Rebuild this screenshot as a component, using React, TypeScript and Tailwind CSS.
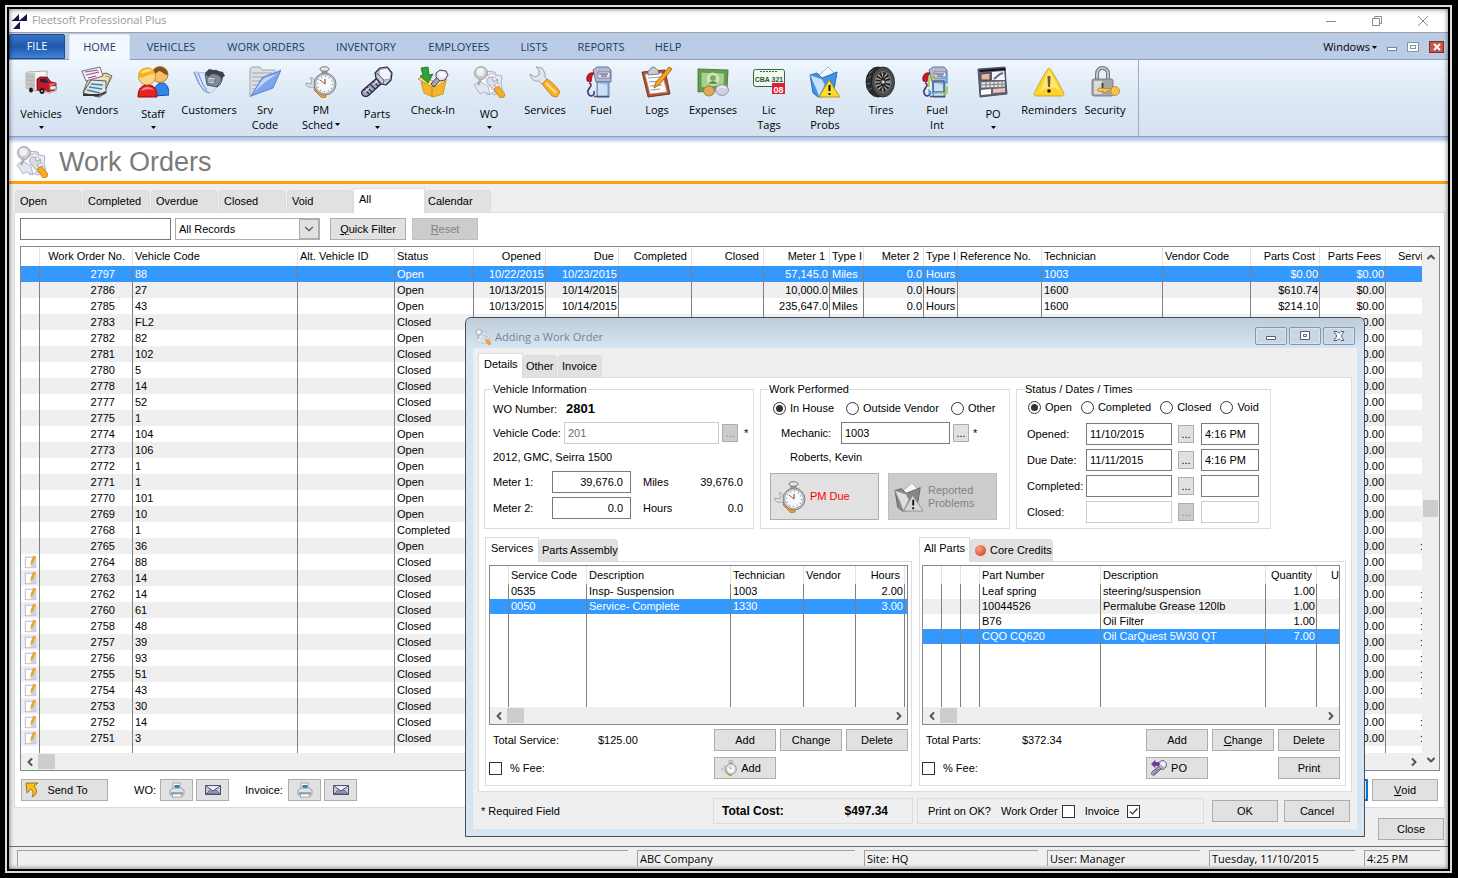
import type { ReactNode } from 'react';
import clsx from 'clsx';
import { ChevronDown, ChevronLeft, ChevronRight, ChevronUp } from 'lucide-react';

/* ---------- icons ---------- */

type IconProps = { className?: string };

function Svg({ className = 'size-8', children }: { className?: string; children: ReactNode }) {
    return (
        <svg viewBox="0 0 32 32" className={clsx('shrink-0', className)} fill="none" strokeLinejoin="round" aria-hidden="true">
            {children}
        </svg>
    );
}

function LogoIcon() {
    return (
        <svg viewBox="0 0 16 16" className="size-4" fill="#21124a" aria-hidden="true">
            <path d="M0 8 7 1v7zM8 7l7-6v6zM0 7h15v1H0zM8 8.500V16H1z" />
        </svg>
    );
}

function TruckIcon() {
    return (
        <Svg>
            <path d="m1 7 2-1 19-1v16l-12 4-9-3z" fill="#f4f4f4" stroke="#9a9a9a" strokeWidth="0.8" />
            <path d="M1 7h9v18l-9-3z" fill="#c4c4c4" />
            <path d="m2 10 7 1m-7 3 7 1m-7 3 7 1" stroke="#aaa" strokeWidth="0.800" />
            <path d="M12 13l3-2h7l4 5 5 1v7l-6 3-13-3z" fill="#c9182b" stroke="#5d0b14" strokeWidth="0.8" />
            <path d="M15 13h6l3 4-9-1z" fill="#1d2a36" />
            <path d="m24 18 6-1 1 1-6 2z" fill="#f0707a" />
            <path d="M25 20h6v3l-6 1z" fill="#f0f0f0" stroke="#777" strokeWidth="0.6" />
            <path d="m17 24 6 3 8-2v-2" stroke="#c9c9c9" strokeWidth="1.500" />
            <ellipse cx="17" cy="25" rx="2.500" ry="3" fill="#1a1a1a" />
            <circle cx="17" cy="25" r="1" fill="#bbb" />
            <ellipse cx="6" cy="24" rx="2" ry="2.500" fill="#1a1a1a" />
        </Svg>
    );
}

function VendorsIcon() {
    return (
        <Svg>
            <path d="M7 13 25 7l6 3-8 17-5 4L2 27z" fill="#e9dfbd" stroke="#3d362b" strokeWidth="0.800" />
            <path d="M2 27 10 14l15 1 0 12-7 4z" fill="#dce8f1" stroke="#3d362b" strokeWidth="0.800" />
            <path d="m10 18 12 1M8 21l13 2M6 24l13 3" stroke="#4c7f9c" strokeWidth="1.400" />
            <path d="M2 29h16l7-3" stroke="#39342c" strokeWidth="1.800" />
            <path d="M1 5 19 1l3 9-17 5z" fill="#f8eef6" stroke="#5c4a5a" strokeWidth="0.800" />
            <path d="m4 6 13-2M5 9l13-3M7 12l8-2" stroke="#8d4f8a" strokeWidth="1.100" />
            <path d="m24 10 5 1-3 9" stroke="#a7935b" />
        </Svg>
    );
}

function StaffIcon() {
    return (
        <Svg>
            <path d="M17 30c0-9 3-13 8-13s7 5 7 12z" fill="#2f86e8" stroke="#1450a0" />
            <circle cx="23" cy="8.500" r="8" fill="#f6c069" stroke="#a2631a" strokeWidth="0.800" />
            <path d="M15 8C16-2 31-1 31 9c-4 0-6-4-9-4-2 2-4 3-7 3z" fill="#80521f" />
            <path d="M1 31c0-8 3-12 10-12s9 5 9 12z" fill="#e32224" stroke="#960d11" />
            <path d="M4 25c2-5 10-5 13-1-4-1-9-1-13 1z" fill="#ff8d86" />
            <circle cx="10" cy="10.500" r="8.500" fill="#fbd58a" stroke="#c27a10" strokeWidth="0.800" />
            <path d="M1 11C1-1 17-1 18 8c-7-1-10 5-17 3z" fill="#f9b020" />
            <path d="M4 7c3-5 9-5 11-2-4 0-7 3-11 2z" fill="#ffe08c" />
        </Svg>
    );
}

function CustomersIcon() {
    return (
        <Svg>
            <path d="M1 6c4 3 4 12 10 19l6 2c7-4 9-9 10-14L14 7z" fill="#d7e6fb" stroke="#9db6df" strokeWidth="0.800" />
            <path d="M1 6c3 8 6 17 15 21M5 7c3 6 4 12 9 17" stroke="#5d84c4" />
            <path d="m12 8 11-4 8 5-7 12-10-2z" fill="#828c98" stroke="#40474f" strokeWidth="0.800" />
            <path d="m12 7 4-4 14 3 2 4-4 2-3-3-6-1-4 3z" fill="#3d444c" />
            <path d="m15 11 8 1-2 6-6-1z" fill="#d5dae0" stroke="#59626d" strokeWidth="0.700" />
            <path d="M17 13v3m2-3v3m2-3v3" stroke="#59626d" strokeWidth="0.900" />
            <path d="M29 12c0 3-1 6-5 9" stroke="#22262b" />
        </Svg>
    );
}

function FolderIcon() {
    return (
        <Svg>
            <path d="M1 31V3l2-2h8l2 3h13v4z" fill="#dcdfe4" stroke="#8f959e" strokeWidth="0.800" />
            <path d="M3 7h20M3 11h16M3 15h12M3 19h10M3 23h6" stroke="#b3b8c0" strokeWidth="1.500" />
            <path d="M2 30 13 12c6-4 12-4 19-8l-8 18z" fill="#7ea6ec" stroke="#4d73bd" strokeWidth="0.800" />
            <path d="m5 26 9-13c5-3 10-3 15-6l-14 10z" fill="#c3d8fb" />
        </Svg>
    );
}

function StopwatchIcon({ className }: IconProps) {
    return (
        <Svg className={className}>
            <path d="m1 17 5 1 1-3-2-3c3-1 5 2 5 5l8 9-3 3-7-8c-4 1-8-1-7-4z" fill="#dde3ea" stroke="#8c949e" strokeWidth="0.800" />
            <path d="m9 24 8 8 4-1v-3l-9-8z" fill="#f2a128" stroke="#b76f10" strokeWidth="0.800" />
            <path d="M17 4h5v3h-5z" fill="#b4b7ba" stroke="#777" strokeWidth="0.700" />
            <path d="M15 3c0-3 9-3 9 0s-9 3-9 0z" fill="#e6e8ea" stroke="#666" strokeWidth="0.900" />
            <circle cx="20" cy="18" r="11" fill="#b9bec3" stroke="#6c7278" strokeWidth="0.800" />
            <circle cx="20" cy="18" r="9.300" fill="#f7f8f9" stroke="#979da3" strokeWidth="0.700" />
            <circle cx="20" cy="18" r="7.500" stroke="#777" strokeWidth="1.200" strokeDasharray="0.900 3.027" />
            <path d="m20 18-5-4" stroke="#d02b22" strokeWidth="0.900" />
            <path d="M20 18v-5" stroke="#333" strokeWidth="0.900" />
        </Svg>
    );
}

function BoltIcon({ className, arrow }: IconProps & { arrow?: boolean }) {
    return (
        <Svg className={className}>
            <path d="m16 12 5 5L8 29c-2 2-6 2-7-1-1-2 0-3 1-4z" fill="#a9a6c2" stroke="#24213a" strokeWidth="1.200" />
            <path d="m12 15 5 5M9 18l5 5M6 21l5 5M3 23l5 5" stroke="#35324e" strokeWidth="1.400" />
            <path d="m17 14-4 4M8 22l-4 4" stroke="#efeef8" strokeWidth="1.200" />
            <path d="m14 7 5-5 7-1 5 6-1 7-5 5-5-1-5-6z" fill="#c6c4da" stroke="#24213a" strokeWidth="1.200" />
            <path d="m18 4 8-2 4 5-1 6-6 1-5-5z" fill="#f2f2fa" stroke="#8582a0" strokeWidth="0.700" />
            <path d="m14 7 4 2 5 5-1 4" stroke="#514e6c" strokeWidth="0.800" />
            {arrow && <path d="m1 8 7-7v4h8v6H8v4z" fill="#7d2fa3" stroke="#491663" />}
        </Svg>
    );
}

function CheckInIcon() {
    return (
        <Svg>
            <path d="m4 16 12 4 13-5-3 13-10 3-9-4z" fill="#f5b62d" stroke="#c98b16" strokeWidth="0.800" />
            <path d="m1 13 5-3 10 5-1 6zM30 14l-6-3-8 5 3 5z" fill="#fddd7d" stroke="#c78a17" strokeWidth="0.800" />
            <path d="M15 21v10" stroke="#c78a17" />
            <path d="m4 2 7-1 1 8 4-1-5 9-8-7 3-1z" fill="#2ea336" stroke="#146b1b" strokeWidth="0.800" />
            <path d="m21 10 3 3-7 8-3-3z" fill="#a6a5bf" stroke="#34324a" strokeWidth="0.900" />
            <path d="m19 7 4-3 6 1 2 4-3 5-5 1-4-4z" fill="#e4e3ef" stroke="#34324a" strokeWidth="0.900" />
            <path d="m22 6 5 0 2 4-4 2-3-3z" fill="#fafaff" />
        </Svg>
    );
}

function WorkOrderIcon({ className }: IconProps) {
    return (
        <Svg className={className}>
            <path d="m11 5 11 1 1 3 6 1-1 7 2 9-9 3-12-9z" fill="#e9ecf3" stroke="#9aa0b4" strokeWidth="0.800" />
            <path d="m6 13 14-6 8 16-14 6z" fill="#fbfbfe" stroke="#a9aec0" strokeWidth="0.800" />
            <path d="m1 19 5-4 9 5 2 9-6-3-4 2z" fill="#e3e6ee" stroke="#a5aaba" strokeWidth="0.800" />
            <circle cx="8" cy="7" r="6.500" fill="#c7c9cc" stroke="#909397" strokeWidth="0.800" />
            <circle cx="7.500" cy="6" r="4" fill="#f0f1f2" />
            <path d="m8 13-3 6" stroke="#aaacaf" strokeWidth="2.500" />
            <path d="m16 11 4 0 0 4 3 0 1-2c2 4-1 6-3 6l5 5-3 3-8-9c-2-2-2-5 1-7z" fill="#d9dde5" stroke="#8d95a3" strokeWidth="0.800" />
            <path d="m21 23 4-3 7 8-1 3-4 1z" fill="#f8ab25" stroke="#c77d0d" strokeWidth="0.800" />
        </Svg>
    );
}

function WrenchIcon() {
    return (
        <Svg>
            <path d="m7 1 6 1 3 5v4l4 4-5 5-5-5c-5 1-8-2-9-7l5 3 4-2 0-5z" fill="#e2e5ea" stroke="#8b8f98" strokeWidth="0.800" />
            <path d="m13 18 5-5c5 3 9 7 13 13l-3 5-5-1z" fill="#fbae23" stroke="#bd760c" strokeWidth="0.800" />
            <path d="m17 17 10 10" stroke="#ffe094" strokeWidth="2" />
        </Svg>
    );
}

function FuelPump({ linked }: { linked?: boolean }) {
    return (
        <Svg>
            <path d="m8 4 4-3h11l3 3v12H11z" fill="#b3b9d6" stroke="#565b80" strokeWidth="0.800" />
            <path d="M12 16h12v15H12z" fill="#9dbfe4" stroke="#4f6a90" strokeWidth="0.800" />
            <path d="M13 6h12v6H13z" fill="#eef0fa" stroke="#5b5f86" strokeWidth="0.700" />
            <path d="M14 8h9M16 10h6" stroke="#3a3f66" />
            <path d="m13 17 9 2v11h-9z" fill="#cbe0f5" />
            <path d="M2 15C1 9 4 6 9 7l-2 3-1 6z" fill="#d3152c" stroke="#7c0915" strokeWidth="0.800" />
            <path d="M4 17c6 2-3 6-1 10 2 5 7 3 6-2" stroke="#4a3567" strokeWidth="1.600" />
            <path d="M9 30.500h15" stroke="#4a5170" strokeWidth="1.500" />
            {linked && (
                <g strokeWidth="1.500">
                    <path d="M12 15h11v11H12z" stroke="#4e6b92" />
                    <path d="M8 21V11h8" stroke="#9ccc2c" />
                    <path d="M19 11h7v7" stroke="#4fb3ee" />
                    <path d="M26 20v7h-8" stroke="#9ccc2c" />
                    <path d="M16 27H8v-4" stroke="#4fb3ee" />
                </g>
            )}
        </Svg>
    );
}

function LogsIcon() {
    return (
        <Svg>
            <path d="m1 6 23-2 5 24-22 3z" fill="#bb4f2a" stroke="#5e220c" strokeWidth="0.800" />
            <path d="m4 8 17-1 5 19-17 2z" fill="#fdfdfd" stroke="#999" strokeWidth="0.700" />
            <path d="m7 12 13-1M8 16l12-1M9 20l12-1M10 24l9-1" stroke="#9a9a9a" strokeWidth="1.200" />
            <path d="M7 5c3 0 2-4 5-4s3 3 5 3l1 4-11 1z" fill="#c9ccd0" stroke="#666" strokeWidth="0.800" />
            <path d="m13 22 2-6L28 1l3 2-13 16z" fill="#f8a324" stroke="#97590a" strokeWidth="0.800" />
        </Svg>
    );
}

function MoneyIcon() {
    return (
        <Svg>
            <path d="m1 3 30 1-1 19-29 3z" fill="#67a150" stroke="#356d2b" strokeWidth="0.800" />
            <path d="m4 6 24 1-1 13-23 2z" fill="#a9cf8f" stroke="#4d8a3c" strokeWidth="0.800" />
            <ellipse cx="16" cy="13" rx="6.500" ry="6.500" fill="#cfe4ba" />
            <path d="M12 18c0-4 8-4 8 0z" fill="#5d9550" />
            <circle cx="16" cy="12" r="2.800" fill="#75ab65" />
            <ellipse cx="12" cy="25" rx="5.500" ry="5" fill="#d9ab57" stroke="#9c7023" strokeWidth="0.800" />
            <ellipse cx="25" cy="24" rx="6.500" ry="5.500" fill="#d0d0dc" stroke="#8c8ca0" strokeWidth="0.800" />
            <path d="M21 24c0-3 5-4 8-2" stroke="#fff" />
        </Svg>
    );
}

function PlateIcon() {
    return (
        <Svg>
            <rect x="0.500" y="3.500" width="31" height="17" rx="2" fill="#f2f7f0" stroke="#2d6b3c" />
            <path d="M7 5.500h18" stroke="#2d6b3c" strokeDasharray="2 1" />
            <text x="16" y="16" textAnchor="middle" fontSize="7" fontWeight="700" fontFamily="Liberation Sans" fill="#205c2f">
                CBA 321
            </text>
            <rect x="19" y="17" width="13" height="11" fill="#e21c3c" />
            <text x="25.500" y="26.500" textAnchor="middle" fontSize="9" fontWeight="700" fontFamily="Liberation Sans" fill="#fff">
                08
            </text>
        </Svg>
    );
}

function ReportedIcon({ className }: IconProps) {
    return (
        <Svg className={className}>
            <path d="m9 10 10-9 9 9-5 10-10 1z" fill="#f3f6fb" stroke="#9aa6b8" strokeWidth="0.800" />
            <path d="m1 9 7-2 5 5 15-6-4 24-15 1-5-4z" fill="#3c93e8" stroke="#1d5ba6" strokeWidth="0.800" />
            <path d="m1 9 6 14 3 8 6-12-3-6z" fill="#c9e2fb" stroke="#5b9be0" strokeWidth="0.800" />
            <path d="m20 14 11 17H10z" fill="#fcdc2a" stroke="#a68a08" strokeWidth="0.800" />
            <path d="M20.500 19v6m0 2v2" stroke="#111" strokeWidth="2" />
        </Svg>
    );
}

function TireIcon() {
    return (
        <Svg>
            <ellipse cx="13" cy="16" rx="12" ry="15" fill="#2b2b2b" stroke="#111" strokeWidth="0.800" />
            <path d="M4 8l4-4M2 13l4-3M1 18l4-1M3 24l4-2" stroke="#6d6d6d" />
            <ellipse cx="18" cy="16" rx="11.500" ry="15" fill="#4b4b4b" stroke="#161616" strokeWidth="0.800" />
            <ellipse cx="18" cy="16" rx="8" ry="10.500" fill="#1e1e1e" stroke="#8b8b8b" strokeWidth="0.800" />
            <ellipse cx="18" cy="16" rx="5" ry="7" stroke="#a5a5a5" strokeWidth="5" strokeDasharray="1.300 1.700" />
            <circle cx="18" cy="16" r="2" fill="#ccc" stroke="#444" strokeWidth="0.800" />
        </Svg>
    );
}

function PurchaseOrderIcon() {
    return (
        <Svg>
            <path d="m1 3 27-2 2 27-27 3z" fill="#63627a" stroke="#3d3d4a" strokeWidth="0.800" />
            <path d="m2 4 26-2 1 2-26 2z" fill="#15151b" />
            <path d="m4 8 9-1v7H4z" fill="#e5b7a3" stroke="#333" strokeWidth="0.800" />
            <path d="m15 6 12-1 1 9H15z" fill="#f3f3f9" />
            <path d="m17 13 6-5 3-1" stroke="#66638c" strokeWidth="2" />
            <path d="m4 16 24-1v6L4 22z" fill="#e7e7e7" stroke="#666" strokeWidth="0.700" />
            <path d="M9 16v6m4-6v6m4-6v5m4-6v6m4-6v6M4 19l24-1" stroke="#666" strokeWidth="0.800" />
            <path d="m4 24 10-1v5l-10 1z" fill="#fff" />
            <path d="m16 23 12-1v4l-12 1z" fill="#eac2b1" />
        </Svg>
    );
}

function ReminderIcon() {
    return (
        <Svg>
            <path d="M16 2c2 0 15 25 15 26s-1 2-2 2H3c-1 0-2-1-2-2S14 2 16 2z" fill="#fdd32c" stroke="#c39a1c" strokeWidth="0.800" />
            <path d="M16 4 28 26c-8-9-19-2-22 1z" fill="#ffe573" />
            <path d="M14.500 10h3L17 21h-2z" fill="#6b5836" />
            <circle cx="16" cy="25" r="1.800" fill="#17130c" />
        </Svg>
    );
}

function SecurityIcon() {
    return (
        <Svg>
            <path d="M8 15V8c0-8 11-8 11 0v7" stroke="#777a7d" strokeWidth="4" />
            <path d="M8 15V8c0-8 11-8 11 0v7" stroke="#d9dbdd" strokeWidth="1.500" />
            <rect x="3" y="13" width="21" height="17" rx="2" fill="#a4a7aa" stroke="#6c6e70" strokeWidth="0.800" />
            <path d="M5 15h8v13H5z" fill="#d9dbdd" />
            <path d="M12.500 17h2v5h-2z" fill="#444" />
            <circle cx="26" cy="25" r="4.500" fill="#fbc64a" stroke="#c07b13" strokeWidth="0.800" />
            <path d="m22 23-12-1-2 2 3 2 3-1 2 2 2-2h4z" fill="#fbc64a" stroke="#c07b13" strokeWidth="0.800" />
            <circle cx="27" cy="25" r="1.300" fill="#fff" stroke="#c07b13" strokeWidth="0.600" />
        </Svg>
    );
}

function NoteIcon() {
    return (
        <svg viewBox="0 0 16 16" className="ml-[3px] size-3.5" aria-hidden="true">
            <path d="M1.500 2.500h12v12h-12z" fill="#fdfdfd" stroke="#b4b4c2" />
            <path d="M11 4h2v10H7z" fill="#cfd3e6" />
            <path d="m8 11 0-3 3-7 2 1-3 7z" fill="#f9a81d" stroke="#e08a10" strokeWidth="0.600" />
        </svg>
    );
}

function PrinterIcon() {
    return (
        <svg viewBox="0 0 16 16" className="size-4" aria-hidden="true">
            <path d="M4 1h7v6H4z" fill="#fff" stroke="#8d949c" strokeWidth="0.800" />
            <path d="M5.500 3h5v4h-5z" fill="#2b7fa8" />
            <path d="m1 8 3-2h8l3 2v5H1z" fill="#dfe3e7" stroke="#8d949c" strokeWidth="0.800" />
            <path d="M2 11h12" stroke="#5f666d" />
            <path d="m4 12-1 3h10l-1-3z" fill="#fff" stroke="#8d949c" strokeWidth="0.800" />
        </svg>
    );
}

function MailIcon() {
    return (
        <svg viewBox="0 0 16 12" className="h-3 w-4" aria-hidden="true">
            <path d="M0.500 1.500h15v9h-15z" fill="#c6c8dc" stroke="#4d4f68" />
            <path d="m1 10 5-5 2 1.500L10 5l5 5z" fill="#8f92b4" stroke="#4d4f68" strokeWidth="0.700" />
            <path d="m1 2 7 5 7-5" fill="#eef" stroke="#4d4f68" />
        </svg>
    );
}

function SendIcon() {
    return (
        <svg viewBox="0 0 14 16" className="h-4 w-3.5" aria-hidden="true">
            <path d="M1 1h12L9 4c4 4 3 9-2 11 2-4 1-6-1-8l-4 4z" fill="#fbbf1b" stroke="#8d6a10" strokeWidth="0.900" />
        </svg>
    );
}

function Caret({ className }: IconProps) {
    return (
        <svg viewBox="0 0 5 3" className={clsx('h-[3px] w-[5px]', className)} fill="#000" aria-hidden="true">
            <path d="M0 0h5L2.500 3z" />
        </svg>
    );
}

/* ---------- data ---------- */

const ribbonTabs = [
    { name: 'VEHICLES', width: 'w-[82px]' },
    { name: 'WORK ORDERS', width: 'w-[108px]' },
    { name: 'INVENTORY', width: 'w-[92px]' },
    { name: 'EMPLOYEES', width: 'w-[94px]' },
    { name: 'LISTS', width: 'w-14' },
    { name: 'REPORTS', width: 'w-[78px]' },
    { name: 'HELP', width: 'w-14' },
];

type Tool = { lines: string[]; icon: ReactNode; menu?: 'below' | 'inline' };

const tools: Tool[] = [
    { lines: ['Vehicles'], icon: <TruckIcon />, menu: 'below' },
    { lines: ['Vendors'], icon: <VendorsIcon /> },
    { lines: ['Staff'], icon: <StaffIcon />, menu: 'below' },
    { lines: ['Customers'], icon: <CustomersIcon /> },
    { lines: ['Srv', 'Code'], icon: <FolderIcon /> },
    { lines: ['PM', 'Sched'], icon: <StopwatchIcon />, menu: 'inline' },
    { lines: ['Parts'], icon: <BoltIcon />, menu: 'below' },
    { lines: ['Check-In'], icon: <CheckInIcon /> },
    { lines: ['WO'], icon: <WorkOrderIcon />, menu: 'below' },
    { lines: ['Services'], icon: <WrenchIcon /> },
    { lines: ['Fuel'], icon: <FuelPump /> },
    { lines: ['Logs'], icon: <LogsIcon /> },
    { lines: ['Expenses'], icon: <MoneyIcon /> },
    { lines: ['Lic', 'Tags'], icon: <PlateIcon /> },
    { lines: ['Rep', 'Probs'], icon: <ReportedIcon /> },
    { lines: ['Tires'], icon: <TireIcon /> },
    { lines: ['Fuel', 'Int'], icon: <FuelPump linked /> },
    { lines: ['PO'], icon: <PurchaseOrderIcon />, menu: 'below' },
    { lines: ['Reminders'], icon: <ReminderIcon /> },
    { lines: ['Security'], icon: <SecurityIcon /> },
];

type Column = { label: string; width: string; right?: boolean; head?: string; cell?: string };

const orderColumns: Column[] = [
    { label: '', width: 'w-[19px]' },
    { label: 'Work Order No.', width: 'w-[93px]', right: true, head: 'pr-[7px]', cell: 'pr-[17px]' },
    { label: 'Vehicle Code', width: 'w-[165px]' },
    { label: 'Alt. Vehicle ID', width: 'w-[97px]' },
    { label: 'Status', width: 'w-[79px]' },
    { label: 'Opened', width: 'w-[72px]', right: true },
    { label: 'Due', width: 'w-[73px]', right: true },
    { label: 'Completed', width: 'w-[73px]', right: true },
    { label: 'Closed', width: 'w-[72px]', right: true },
    { label: 'Meter 1', width: 'w-[66px]', right: true },
    { label: 'Type I', width: 'w-[34px]' },
    { label: 'Meter 2', width: 'w-[60px]', right: true },
    { label: 'Type I', width: 'w-[34px]' },
    { label: 'Reference No.', width: 'w-[84px]' },
    { label: 'Technician', width: 'w-[121px]' },
    { label: 'Vendor Code', width: 'w-[88px]' },
    { label: 'Parts Cost', width: 'w-[69px]', right: true },
    { label: 'Parts Fees', width: 'w-[66px]', right: true },
    { label: 'Servi', width: 'w-auto', head: 'pl-3' },
];

// number, vehicle, status, has note, has service cost
const orders: [string, string, string, boolean?, boolean?][] = [
    ['2797', '88', 'Open'],
    ['2786', '27', 'Open'],
    ['2785', '43', 'Open'],
    ['2783', 'FL2', 'Closed'],
    ['2782', '82', 'Open'],
    ['2781', '102', 'Closed'],
    ['2780', '5', 'Closed'],
    ['2778', '14', 'Closed'],
    ['2777', '52', 'Closed'],
    ['2775', '1', 'Closed'],
    ['2774', '104', 'Open'],
    ['2773', '106', 'Open'],
    ['2772', '1', 'Open'],
    ['2771', '1', 'Open'],
    ['2770', '101', 'Open'],
    ['2769', '10', 'Open'],
    ['2768', '1', 'Completed'],
    ['2765', '36', 'Open', false, true],
    ['2764', '88', 'Closed', true],
    ['2763', '14', 'Closed', true],
    ['2762', '14', 'Closed', true, true],
    ['2760', '61', 'Closed', true, true],
    ['2758', '48', 'Closed', true, true],
    ['2757', '39', 'Closed', true, true],
    ['2756', '93', 'Closed', true, true],
    ['2755', '51', 'Closed', true, true],
    ['2754', '43', 'Closed', true, true],
    ['2753', '30', 'Closed', true],
    ['2752', '14', 'Closed', true, true],
    ['2751', '3', 'Closed', true, true],
];

const details: Record<string, string[]> = {
    '2797': ['10/22/2015', '10/23/2015', '', '', '57,145.0', 'Miles', '0.0', 'Hours', '', '1003', '', '$0.00'],
    '2786': ['10/13/2015', '10/14/2015', '', '', '10,000.0', 'Miles', '0.0', 'Hours', '', '1600', '', '$610.74'],
    '2785': ['10/13/2015', '10/14/2015', '', '', '235,647.0', 'Miles', '0.0', 'Hours', '', '1600', '', '$214.10'],
};

const emptyDetails = Array(12).fill('');

const orderRows: ReactNode[][] = orders.map(([no, vehicle, status, note, cost]) => [
    note ? <NoteIcon /> : '',
    no,
    vehicle,
    '',
    status,
    ...(details[no] ?? emptyDetails),
    '$0.00',
    cost ? <span className="pl-8">:</span> : '',
]);

const serviceColumns: Column[] = [
    { label: '', width: 'w-[19px]' },
    { label: 'Service Code', width: 'w-[78px]' },
    { label: 'Description', width: 'w-[144px]' },
    { label: 'Technician', width: 'w-[73px]' },
    { label: 'Vendor', width: 'w-[52px]' },
    { label: 'Hours', width: 'w-[49px]', right: true },
    { label: '', width: 'w-auto' },
];

const serviceRows = [
    ['', '0535', 'Insp- Suspension', '1003', '', '2.00', ''],
    ['', '0050', 'Service- Complete', '1330', '', '3.00', ''],
];

const partColumns: Column[] = [
    { label: '', width: 'w-[19px]' },
    { label: '', width: 'w-[19px]' },
    { label: '', width: 'w-[19px]' },
    { label: 'Part Number', width: 'w-[121px]' },
    { label: 'Description', width: 'w-[165px]' },
    { label: 'Quantity', width: 'w-[51px]', right: true },
    { label: 'U', width: 'w-auto', head: 'pl-3.5' },
];

const partRows = [
    ['', '', '', 'Leaf spring', 'steering/suspension', '1.00', ''],
    ['', '', '', '10044526', 'Permalube Grease 120lb', '1.00', ''],
    ['', '', '', 'B76', 'Oil Filter', '1.00', ''],
    ['', '', '', 'CQO CQ620', 'Oil CarQuest 5W30 QT', '7.00', ''],
];

/* ---------- shared controls ---------- */

function Button({ children, className, disabled }: { children: ReactNode; className?: string; disabled?: boolean }) {
    return (
        <button
            disabled={disabled}
            className={clsx(
                'flex h-[22px] shrink-0 items-center justify-center border',
                disabled ? 'border-[#bfbfbf] bg-[#cccccc] text-[#838383]' : 'border-[#adadad] bg-[#e1e1e1]',
                className,
            )}
        >
            {children}
        </button>
    );
}

function DotsButton({ label, disabled }: { label: string; disabled?: boolean }) {
    return (
        <button
            aria-label={label}
            disabled={disabled}
            className={clsx(
                'h-[18px] w-4 shrink-0 border border-[#adadad] text-[11px] leading-4',
                disabled ? 'bg-[#cccccc] text-[#838383]' : 'bg-[#e1e1e1]',
            )}
        >
            ...
        </button>
    );
}

function Field({ id, value = '', className, label, disabled }: { id?: string; value?: string; className?: string; label?: string; disabled?: boolean }) {
    return (
        <input
            id={id}
            aria-label={label}
            defaultValue={value}
            disabled={disabled}
            className={clsx(
                'h-[22px] shrink-0 border bg-white px-[3px]',
                disabled ? 'border-[#cccccc] text-[#6d6d6d]' : 'border-[#7a7a7a]',
                className,
            )}
        />
    );
}

function Radio({ name, label, checked }: { name: string; label: string; checked?: boolean }) {
    return (
        <label className="flex items-center gap-1">
            <input
                type="radio"
                name={name}
                defaultChecked={checked}
                className="grid size-[13px] appearance-none place-content-center rounded-full border border-[#333333] bg-white before:size-[7px] before:rounded-full checked:before:bg-[#333333]"
            />
            {label}
        </label>
    );
}

function Checkbox({ id, checked }: { id: string; checked?: boolean }) {
    return (
        <span className="relative size-[13px] shrink-0">
            <input id={id} type="checkbox" defaultChecked={checked} className="peer block size-[13px] appearance-none border border-[#333333] bg-white" />
            <svg viewBox="0 0 13 13" className="pointer-events-none absolute inset-0 hidden size-[13px] peer-checked:block" fill="none" stroke="#333">
                <path d="m3 6.500 2.500 2.500L10.500 3.500" strokeWidth="1.200" />
            </svg>
        </span>
    );
}

function Tab({ active, children, className }: { active?: boolean; children: ReactNode; className?: string }) {
    return (
        <button
            role="tab"
            aria-selected={!!active}
            className={clsx(
                'flex shrink-0 items-center border border-b-0 border-[#dcdcdc] whitespace-nowrap',
                active ? 'z-10 -mb-px h-[25px] bg-white pb-1' : 'h-[22px] rounded-t-sm bg-[#e1e1e1]',
                className,
            )}
        >
            {children}
        </button>
    );
}

function Grid({
    columns,
    rows,
    selected,
    headHeight,
    rowHeight,
    fillHeight,
    label,
}: {
    columns: Column[];
    rows: ReactNode[][];
    selected: number;
    headHeight: string;
    rowHeight: string;
    fillHeight: string;
    label: string;
}) {
    return (
        <table aria-label={label} className="w-full table-fixed border-separate border-spacing-0 leading-[15px]">
            <thead>
                <tr className={headHeight}>
                    {columns.map((c, i) => (
                        <th
                            key={i}
                            className={clsx(
                                'overflow-hidden border-r border-[#e2e2e2] p-0 font-normal whitespace-nowrap last:border-r-0',
                                c.width,
                                c.right ? 'text-right' : 'text-left',
                                c.head ?? (c.right ? 'pr-1' : 'pl-0.5'),
                            )}
                        >
                            {c.label}
                        </th>
                    ))}
                </tr>
            </thead>
            <tbody>
                {rows.map((row, r) => (
                    <tr key={r} className={clsx(rowHeight, r === selected ? 'bg-[#3399ff] text-white' : r % 2 === 1 && 'bg-[#efefef]')}>
                        {row.map((value, i) => (
                            <td
                                key={i}
                                className={clsx(
                                    'overflow-hidden border-r border-[#808080] p-0 whitespace-nowrap last:border-r-0',
                                    columns[i].right && 'text-right',
                                    columns[i].cell ?? (columns[i].right ? 'pr-px' : i > 0 && 'pl-0.5'),
                                )}
                            >
                                {value}
                            </td>
                        ))}
                    </tr>
                ))}
                <tr className={fillHeight}>
                    {columns.map((_, i) => (
                        <td key={i} className="border-r border-[#808080] p-0 last:border-r-0" />
                    ))}
                </tr>
            </tbody>
        </table>
    );
}

function HorizontalScroll() {
    return (
        <div className="flex h-[17px] items-center bg-[#efefef] text-[#555555]">
            <span className="flex w-[17px] justify-center">
                <ChevronLeft className="size-3" strokeWidth={4} />
            </span>
            <span className="h-[15px] w-[17px] bg-[#cdcdcd]" />
            <span className="ml-auto flex w-[17px] justify-center">
                <ChevronRight className="size-3" strokeWidth={4} />
            </span>
        </div>
    );
}

/* ---------- page parts ---------- */

function TitleBar() {
    return (
        <div className="flex h-6 items-center border-b border-[#a0a0a0] bg-white pr-5 pl-[3px] font-['Open_Sans',sans-serif] text-[#9a9a9a]">
            <LogoIcon />
            <span className="ml-1">Fleetsoft Professional Plus</span>
            <div className="ml-auto flex items-center gap-9 text-[#8a8a8a]">
                <button aria-label="Minimize">
                    <svg viewBox="0 0 10 10" className="size-2.5" stroke="currentColor" fill="none">
                        <path d="M0 5.500h10" />
                    </svg>
                </button>
                <button aria-label="Restore">
                    <svg viewBox="0 0 10 10" className="size-2.5" stroke="currentColor" fill="none">
                        <path d="M0.500 2.500h7v7h-7zM2.500 2V0.500h7v7H8" />
                    </svg>
                </button>
                <button aria-label="Close window">
                    <svg viewBox="0 0 10 10" className="size-2.5" stroke="currentColor" fill="none">
                        <path d="m0 0 10 10M10 0 0 10" />
                    </svg>
                </button>
            </div>
        </div>
    );
}

function Ribbon() {
    return (
        <div className="font-['Open_Sans',sans-serif]">
            <nav className="flex h-[27px] items-end border-b border-[#8ba0c7] bg-[#bbcde6] pt-px text-[#1e3a66]">
                <button className="h-[25px] w-14 rounded-t-xs border border-[#1c4a94] bg-linear-to-b from-[#3873c6] via-[#1f59ae] to-[#3f83d6] text-white">FILE</button>
                <button className="z-10 -mb-px ml-1 h-[26px] w-[61px] rounded-t-xs border border-b-0 border-[#dce8f6] bg-[#f3f8fe]">HOME</button>
                {ribbonTabs.map((tab) => (
                    <button key={tab.name} className={clsx('h-6', tab.width)}>
                        {tab.name}
                    </button>
                ))}
                <div className="ml-auto flex h-6 items-center gap-2.5 pr-1 text-black">
                    <button className="flex items-center gap-0.5">
                        Windows <Caret />
                    </button>
                    <button aria-label="Minimize child window" className="mt-1 h-1 w-2.5 border border-[#7b8796] bg-white" />
                    <button aria-label="Restore child window" className="flex h-2.5 w-3 items-center justify-center border border-[#8494aa] bg-white">
                        <span className="h-1 w-1.5 border border-[#8494aa]" />
                    </button>
                    <button aria-label="Close child window" className="flex h-3 w-[15px] items-center justify-center border border-[#8a2a22] bg-[#c35549]">
                        <svg viewBox="0 0 8 8" className="size-2" stroke="#fff" strokeWidth="2">
                            <path d="m1 1 6 6M7 1 1 7" />
                        </svg>
                    </button>
                </div>
            </nav>
            <div className="flex h-[77px] border-b border-[#8ba0c7] bg-linear-to-b from-[#eff6fd] via-[#dce8f5] to-[#d7e2f0]">
                <div className="flex border-r border-[#9aadcf] pr-[5px] pl-1">
                    {tools.map((tool) => (
                        <button key={tool.lines.join(' ')} className="flex w-14 flex-col items-center pt-1.5 leading-[15px] whitespace-nowrap">
                            {tool.icon}
                            <span className={clsx('flex flex-col items-center', tool.menu === 'below' ? 'mt-2' : 'mt-1')}>
                                {tool.lines.map((line, i) => (
                                    <span key={line} className="flex items-center gap-0.5">
                                        {line}
                                        {tool.menu === 'inline' && i === 1 && <Caret />}
                                    </span>
                                ))}
                            </span>
                            {tool.menu === 'below' && <Caret className="mt-[5px]" />}
                        </button>
                    ))}
                </div>
            </div>
            <div className="h-1 bg-linear-to-b from-[#a9bedb] to-[#c8dcf5]" />
            <div className="h-0.5 bg-[#efefef]" />
        </div>
    );
}

function FilterRow() {
    return (
        <div className="flex items-center">
            <input aria-label="Search" className="h-[22px] w-[151px] border border-[#7a7a7a] bg-white px-1" />
            <div className="relative ml-1 h-[22px] w-[145px]">
                <select aria-label="Records" className="block h-[22px] w-full appearance-none border border-[#adadad] bg-white pl-[3px]">
                    <option>All Records</option>
                </select>
                <span className="pointer-events-none absolute top-px right-px flex h-5 w-5 items-center justify-center border border-[#adadad] bg-[#e1e1e1]">
                    <ChevronDown className="size-3.5 text-[#555555]" strokeWidth={2} />
                </span>
            </div>
            <Button className="ml-2.5 w-[76px]">
                <u>Q</u>uick Filter
            </Button>
            <Button className="ml-1.5 w-[66px]" disabled>
                <u>R</u>eset
            </Button>
        </div>
    );
}

function DialogFrameButtons() {
    return (
        <div className="mb-0.5 ml-auto flex gap-0.5">
            {['Minimize', 'Maximize', 'Close'].map((name) => (
                <button key={name} aria-label={`${name} dialog`} className="flex h-[18px] w-8 items-center justify-center rounded-xs border border-[#8496b3] bg-[#c9d6e5] inset-shadow-[0_0_0_1px_#d9e3ee]">
                    <svg viewBox="0 0 12 10" className="h-2.5 w-3" fill="#fff" stroke="#555d72">
                        {name === 'Minimize' && <path d="M1.500 5.500h9v3h-9z" />}
                        {name === 'Maximize' && <path d="M1.500 0.500h9v8h-9zM4.500 3.500h3v2h-3z" />}
                        {name === 'Close' && <path d="M1 0.500h3l2 2 2-2h3L8 5l3 4.500H8l-2-2-2 2H1L4 5z" />}
                    </svg>
                </button>
            ))}
        </div>
    );
}

function VehicleGroup() {
    return (
        <fieldset className="w-[270px] border border-[#dcdcdc] pl-2">
            <legend className="bg-white leading-[14px]">Vehicle Information</legend>
            <div className="flex h-[26px] items-center">
                <span className="w-[73px]">WO Number:</span>
                <b className="text-[13px]">2801</b>
            </div>
            <div className="flex h-[22px] items-center">
                <label htmlFor="vehicle-code" className="w-[71px]">
                    Vehicle Code:
                </label>
                <Field id="vehicle-code" value="201" disabled className="mr-[3px] w-[155px]" />
                <DotsButton label="Choose vehicle" disabled />
                <span className="ml-1.5">*</span>
            </div>
            <div className="flex h-[27px] items-center">2012, GMC, Seirra 1500</div>
            <div className="flex flex-col gap-1">
                <div className="flex items-center">
                    <label htmlFor="meter1" className="w-[59px]">
                        Meter 1:
                    </label>
                    <Field id="meter1" value="39,676.0" className="w-[79px] pr-[7px] text-right" />
                    <span className="ml-3">Miles</span>
                    <span className="mr-2.5 ml-auto">39,676.0</span>
                </div>
                <div className="flex items-center">
                    <label htmlFor="meter2" className="w-[59px]">
                        Meter 2:
                    </label>
                    <Field id="meter2" value="0.0" className="w-[79px] pr-[7px] text-right" />
                    <span className="ml-3">Hours</span>
                    <span className="mr-2.5 ml-auto">0.0</span>
                </div>
            </div>
        </fieldset>
    );
}

function WorkGroup() {
    return (
        <fieldset className="w-[250px] border border-[#dcdcdc] pl-2">
            <legend className="bg-white leading-[14px]">Work Performed</legend>
            <div className="flex h-[26px] items-center gap-3 pb-0.5 pl-1">
                <Radio name="place" label="In House" checked />
                <Radio name="place" label="Outside Vendor" />
                <Radio name="place" label="Other" />
            </div>
            <div className="flex h-[22px] items-center pl-3">
                <label htmlFor="mechanic" className="w-[60px]">
                    Mechanic:
                </label>
                <Field id="mechanic" value="1003" className="mr-[3px] w-[109px]" />
                <DotsButton label="Choose mechanic" />
                <span className="ml-1">*</span>
            </div>
            <div className="flex h-[29px] items-center pb-0.5 pl-[21px]">Roberts, Kevin</div>
            <div className="flex gap-[9px] pl-px">
                <button className="flex h-[47px] w-[109px] items-center gap-1 border border-[#adadad] bg-[#e1e1e1] pl-[3px] text-[#ff0000]">
                    <StopwatchIcon />
                    PM Due
                </button>
                <button disabled className="flex h-[47px] w-[109px] items-center gap-1 border border-[#bfbfbf] bg-[#cccccc] pl-[5px] text-left leading-[13px] text-[#838383]">
                    <ReportedIcon className="size-[30px] grayscale" />
                    Reported Problems
                </button>
            </div>
        </fieldset>
    );
}

const dateRows = [
    { label: 'Opened:', date: '11/10/2015', time: '4:16 PM' },
    { label: 'Due Date:', date: '11/11/2015', time: '4:16 PM' },
    { label: 'Completed:', date: '', time: '' },
    { label: 'Closed:', date: '', time: '', disabled: true },
];

function StatusGroup() {
    return (
        <fieldset className="w-[255px] border border-[#dcdcdc] pl-2">
            <legend className="bg-white leading-[14px]">Status / Dates / Times</legend>
            <div className="flex h-[27px] items-center gap-[9px] pb-1 pl-[3px]">
                <Radio name="status" label="Open" checked />
                <Radio name="status" label="Completed" />
                <Radio name="status" label="Closed" />
                <Radio name="status" label="Void" />
            </div>
            <div className="flex flex-col gap-1 pl-0.5">
                {dateRows.map((row) => (
                    <div key={row.label} className="flex items-center">
                        <label htmlFor={row.label} className="w-[59px]">
                            {row.label}
                        </label>
                        <Field id={row.label} value={row.date} disabled={row.disabled} className="mr-1.5 w-[86px]" />
                        <DotsButton label={`Choose ${row.label}`} disabled={row.disabled} />
                        <Field label={`${row.label} time`} value={row.time} disabled={row.disabled} className="ml-[7px] w-[58px]" />
                    </div>
                ))}
            </div>
        </fieldset>
    );
}

type ListPanelProps = {
    tabs: ReactNode;
    children: ReactNode;
    grid: ReactNode;
    total: string;
    totalWidth: string;
    amount: string;
    feeId: string;
    padding: string;
};

function ListPanel({ tabs, children, grid, total, totalWidth, amount, feeId, padding }: ListPanelProps) {
    return (
        <div className="w-[427px]">
            <div role="tablist" className="flex h-6 items-end">
                {tabs}
            </div>
            <div className={clsx('border border-[#dcdcdc] bg-white pt-[3px] pb-1.5', padding)}>
                <div className="border border-[#828790]">
                    {grid}
                    <HorizontalScroll />
                </div>
                <div className="mt-1 grid grid-cols-[1fr_62px_62px_62px] gap-x-1 gap-y-1.5">
                    <div className="flex items-center pl-1">
                        <span className={totalWidth}>{total}</span>
                        {amount}
                    </div>
                    {children}
                    <div className="col-start-1 row-start-2 flex items-center gap-2">
                        <Checkbox id={feeId} />
                        <label htmlFor={feeId}>% Fee:</label>
                    </div>
                </div>
            </div>
        </div>
    );
}

function WorkOrderDialog() {
    return (
        <section
            role="dialog"
            aria-label="Adding a Work Order"
            className="absolute top-[317px] left-[465px] z-20 w-[900px] rounded-t-md border border-[#454c57] bg-[#d7e4f2] px-[7px] pb-[7px]"
        >
            <header className="-mx-[7px] flex h-[30px] items-center rounded-t-md bg-linear-to-b from-[#bfcddb] to-[#d7e4f2] pt-2 pr-[9px] pl-[9px] font-['Open_Sans',sans-serif] text-[#76859a]">
                <WorkOrderIcon className="size-4" />
                <span className="ml-1">Adding a Work Order</span>
                <DialogFrameButtons />
            </header>
            <div className="bg-[#efefef] px-[5px] py-[5px]">
                <div role="tablist" className="flex h-6 items-end">
                    <Tab active className="w-[45px] pl-[5px]">
                        Details
                    </Tab>
                    <Tab className="w-[34px] pl-0.5">Other</Tab>
                    <Tab className="ml-px w-[44px] pl-[3px]">Invoice</Tab>
                </div>
                <div className="border border-[#dcdcdc] bg-white px-[5px] pt-1 pb-[5px]">
                    <div className="flex h-[147px] items-stretch gap-1.5">
                        <VehicleGroup />
                        <WorkGroup />
                        <StatusGroup />
                    </div>
                    <div className="mt-2 ml-px flex gap-[7px]">
                        <ListPanel
                            total="Total Service:"
                            totalWidth="w-[105px]"
                            amount="$125.00"
                            feeId="service-fee"
                            padding="px-[3px]"
                            tabs={
                                <>
                                    <Tab active className="w-[54px] pl-[5px]">
                                        Services
                                    </Tab>
                                    <Tab className="w-[79px] pl-0.5">Parts Assembly</Tab>
                                </>
                            }
                            grid={<Grid label="Services" columns={serviceColumns} rows={serviceRows} selected={1} headHeight="h-[18px]" rowHeight="h-[15px]" fillHeight="h-[93px]" />}
                        >
                            <Button>Add</Button>
                            <Button>Change</Button>
                            <Button>Delete</Button>
                            <Button className="col-start-2 gap-1 pr-2">
                                <StopwatchIcon className="size-4" />
                                Add
                            </Button>
                        </ListPanel>
                        <ListPanel
                            total="Total Parts:"
                            totalWidth="w-24"
                            amount="$372.34"
                            feeId="parts-fee"
                            padding="pl-0.5 pr-[5px]"
                            tabs={
                                <>
                                    <Tab active className="w-[51px] pl-1">
                                        All Parts
                                    </Tab>
                                    <Tab className="w-[83px] gap-1 pl-1">
                                        <span className="size-[11px] shrink-0 rounded-full bg-radial-[at_35%_30%] from-[#ff9d83] to-[#c8371c]" />
                                        Core Credits
                                    </Tab>
                                </>
                            }
                            grid={<Grid label="Parts" columns={partColumns} rows={partRows} selected={3} headHeight="h-[18px]" rowHeight="h-[15px]" fillHeight="h-[63px]" />}
                        >
                            <Button>Add</Button>
                            <Button>
                                <u>C</u>hange
                            </Button>
                            <Button>Delete</Button>
                            <Button className="col-start-2 gap-1 pr-4">
                                <BoltIcon className="size-4" arrow />
                                PO
                            </Button>
                            <Button className="col-start-4">Print</Button>
                        </ListPanel>
                    </div>
                </div>
                <footer className="mt-1.5 flex h-[26px] items-center">
                    <span className="w-[235px] pl-[3px]">* Required Field</span>
                    <div className="flex h-full w-[200px] items-center justify-between border border-[#dcdcdc] pr-6 pl-2 text-[12px] font-bold">
                        <span>Total Cost:</span>
                        <span>$497.34</span>
                    </div>
                    <div className="ml-1 flex h-full w-[287px] items-center border border-[#dcdcdc] pl-2.5">
                        <span className="mr-2.5">Print on OK?</span>
                        <label htmlFor="print-order" className="mr-1">
                            Work Order
                        </label>
                        <Checkbox id="print-order" />
                        <label htmlFor="print-invoice" className="mr-2 ml-2.5">
                            Invoice
                        </label>
                        <Checkbox id="print-invoice" checked />
                    </div>
                    <Button className="ml-2 w-[66px]">OK</Button>
                    <Button className="ml-1.5 w-[66px]">Cancel</Button>
                </footer>
            </div>
        </section>
    );
}

function StatusBar() {
    const pane = 'h-4 shrink-0 border-t border-l border-[#a0a0a0] pl-0.5 leading-[15px]';
    return (
        <footer className="mt-auto flex gap-[9px] border-t border-[#6e6e6e] pt-[3px] pr-2 pb-[3px] pl-2 font-['Open_Sans',sans-serif]">
            <div className={clsx(pane, 'w-[611px]')} />
            <div className={clsx(pane, 'w-[218px]')}>ABC Company</div>
            <div className={clsx(pane, 'w-[174px]')}>Site: HQ</div>
            <div className={clsx(pane, 'w-[153px]')}>User: Manager</div>
            <div className={clsx(pane, 'w-[146px]')}>Tuesday, 11/10/2015</div>
            <div className={clsx(pane, 'grow')}>4:25 PM</div>
        </footer>
    );
}

export default function App() {
    return (
        <div className="relative flex min-h-screen flex-col bg-black py-[5px] pr-1.5 pl-[5px] font-['Liberation_Sans',sans-serif] text-[11px] text-black">
            <div className="flex grow flex-col border-2 border-[#dcdcdc] p-0.5">
                <div className="relative flex grow flex-col bg-[#efefef]">
                    <TitleBar />
                    <Ribbon />
                    <header className="flex h-[41px] items-center gap-[11px] border-b-[3px] border-[#ff9f0f] bg-white pl-[7px]">
                        <WorkOrderIcon className="size-8" />
                        <h1 className="text-[27px] text-[#7b7b7b]">Work Orders</h1>
                    </header>
                    <div role="tablist" className="mt-1 ml-[5px] flex h-6 items-end pl-px">
                        <Tab className="w-[67px] pl-1">Open</Tab>
                        <Tab className="ml-px w-[67px] pl-1">Completed</Tab>
                        <Tab className="ml-px w-[67px] pl-1">Overdue</Tab>
                        <Tab className="ml-px w-[67px] pl-1">Closed</Tab>
                        <Tab className="ml-px w-[66px] pl-1">Void</Tab>
                        <Tab active className="w-[72px] pl-[5px]">
                            All
                        </Tab>
                        <Tab className="w-[66px] pl-0.5">Calendar</Tab>
                    </div>
                    <main className="mr-[3px] ml-[5px] border border-[#dcdcdc] bg-white pt-[5px] pr-1 pb-1.5 pl-[5px]">
                        <FilterRow />
                        <div className="mt-1.5 flex border border-[#828790]">
                            <div className="min-w-0 grow">
                                <Grid label="Work orders" columns={orderColumns} rows={orderRows} selected={0} headHeight="h-[19px]" rowHeight="h-4" fillHeight="h-[7px]" />
                                <HorizontalScroll />
                            </div>
                            <div className="flex w-[17px] shrink-0 flex-col items-center justify-between bg-[#efefef] py-1 text-[#555555]">
                                <ChevronUp className="size-3" strokeWidth={4} />
                                <span className="h-[17px] w-[15px] bg-[#cdcdcd]" />
                                <ChevronDown className="size-3" strokeWidth={4} />
                            </div>
                        </div>
                        <div className="mt-2 flex items-center pr-0.5 pl-px">
                            <Button className="w-[87px] gap-2 pr-4">
                                <SendIcon />
                                Send To
                            </Button>
                            <span className="ml-[26px] w-[26px]">WO:</span>
                            <Button className="w-[33px]">
                                <PrinterIcon />
                            </Button>
                            <Button className="ml-[3px] w-[33px]">
                                <MailIcon />
                            </Button>
                            <span className="ml-4 w-[43px]">Invoice:</span>
                            <Button className="w-[33px]">
                                <PrinterIcon />
                            </Button>
                            <Button className="ml-[3px] w-[33px]">
                                <MailIcon />
                            </Button>
                            <button aria-label="Change" className="ml-auto h-[22px] w-[66px] border-2 border-[#0078d7] bg-[#e1e1e1]" />
                            <Button className="ml-1 w-[66px]">
                                <u>V</u>oid
                            </Button>
                        </div>
                    </main>
                    <div className="mt-2.5 mb-1.5 flex justify-end pr-1">
                        <Button className="w-[66px]">Close</Button>
                    </div>
                    <StatusBar />
                    <div className="pointer-events-none absolute inset-0 shadow-[inset_0_0_5px_rgba(0,0,0,0.6)]" />
                </div>
            </div>
            <WorkOrderDialog />
        </div>
    );
}
